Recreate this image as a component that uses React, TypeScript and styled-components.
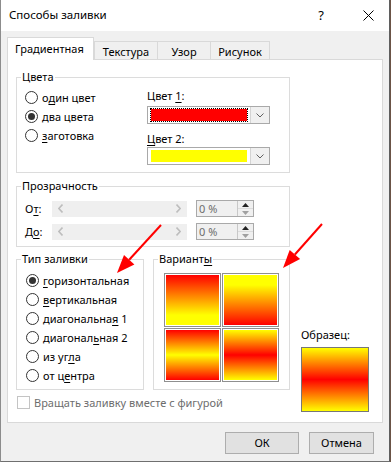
import React from "react";
import styled, { createGlobalStyle } from "styled-components";

const Global = createGlobalStyle`
  html, body { margin: 0; padding: 0; background: #6b5446; }
  body { font-family: "Noto Sans", "Open Sans", sans-serif; font-size: 11px; color: #000; }
  * { box-sizing: border-box; }
`;

const Window = styled.div`
  position: relative;
  width: 390px;
  height: 462px;
  border-left: 1px solid #8c8c8c;
  border-right: 1px solid #5f5f5f;
  border-bottom: 1px solid #6f6f6f;
  background: #f0f0f0;
  display: flex;
  flex-direction: column;
`;

const TitleBar = styled.div`
  height: 31px;
  background: #fff;
  display: flex;
  align-items: center;
  padding-left: 8px;
  font-size: 11.5px;
  line-height: 16px;
`;

const TitleText = styled.div`
  flex: 1;
  margin-top: -1px;
`;

const HelpBtn = styled.div`
  width: 20px;
  text-align: center;
  font-size: 13px;
  margin-right: 32px;
  margin-top: -2px;
`;

const CloseBtn = styled.div`
  width: 11px;
  height: 11px;
  margin-right: 15px;
  margin-top: -1px;
  display: flex;
`;

const Body = styled.div`
  flex: 1;
  padding: 6px 6px 0;
  display: flex;
  flex-direction: column;
`;

const TabStrip = styled.div`
  display: flex;
  align-items: flex-end;
  height: 23px;
  margin-bottom: -1px;
`;

const Tab = styled.div<{ $w: number; $active?: boolean }>`
  width: ${(p) => p.$w}px;
  height: ${(p) => (p.$active ? 23 : 19)}px;
  border: 1px solid #d9d9d9;
  border-bottom: none;
  margin-left: ${(p) => (p.$active ? 0 : -1)}px;
  background: ${(p) => (p.$active ? "#fff" : "#f0f0f0")};
  position: ${(p) => (p.$active ? "relative" : "static")};
  z-index: ${(p) => (p.$active ? 1 : "auto")};
  display: flex;
  align-items: center;
  justify-content: ${(p) => (p.$active ? "flex-start" : "center")};
  padding-left: ${(p) => (p.$active ? 7 : 0)}px;
  padding-top: ${(p) => (p.$active ? 0 : 2)}px;
  line-height: 16px;
  &:first-child + & { margin-left: 0; }
`;

const Panel = styled.div`
  height: 364px;
  background: #fff;
  border: 1px solid #d9d9d9;
  padding: 9px 10px 10px 8px;
  display: grid;
  grid-template-columns: 274px 70px;
  column-gap: 11px;
`;

const LeftCol = styled.div`
  display: flex;
  flex-direction: column;
`;

const RightCol = styled.div`
  display: flex;
  flex-direction: column;
  justify-content: flex-end;
`;

const Group = styled.fieldset<{ $mt?: number; $w?: number }>`
  margin: ${(p) => p.$mt ?? 0}px 0 0;
  padding: 0;
  min-width: 0;
  width: ${(p) => (p.$w ? `${p.$w}px` : "auto")};
  border: 1px solid #dcdcdc;
`;

const Legend = styled.legend`
  margin-left: 4px;
  padding: 0 1px;
  line-height: 16px;
`;

const U = styled.span`
  text-decoration: underline;
  text-underline-offset: 2px;
  text-decoration-thickness: 1px;
`;

/* Colors group */
const ColorsBody = styled.div`
  display: flex;
  padding: 3px 19px 7px 8px;
`;

const RadioCol = styled.div<{ $w?: number }>`
  width: ${(p) => (p.$w ? `${p.$w}px` : "auto")};
  display: flex;
  flex-direction: column;
`;

const RadioRow = styled.div`
  height: 19px;
  display: flex;
  align-items: center;
  gap: 4px;
  line-height: 16px;
`;

const RadioCircle = styled.span<{ $checked?: boolean }>`
  width: 13px;
  height: 13px;
  border-radius: 50%;
  border: 1px solid #333;
  background: #fff;
  display: flex;
  align-items: center;
  justify-content: center;
  flex: none;
  &::after {
    content: "";
    width: 7px;
    height: 7px;
    border-radius: 50%;
    background: ${(p) => (p.$checked ? "#333" : "transparent")};
  }
`;

const PickerCol = styled.div`
  width: 123px;
  display: flex;
  flex-direction: column;
`;

const FieldLabel = styled.div<{ $mt: number }>`
  line-height: 16px;
  margin-top: ${(p) => p.$mt}px;
`;

const Combo = styled.div<{ $mt: number }>`
  margin-top: ${(p) => p.$mt}px;
  height: 18px;
  border: 1px solid #a9a9a9;
  background: #fff;
  display: flex;
`;

const ComboField = styled.div`
  flex: 1;
  padding: 1px 2px;
  display: flex;
`;

const ComboInner = styled.div<{ $focus?: boolean }>`
  flex: 1;
  border: 1px ${(p) => (p.$focus ? "dotted #000" : "solid transparent")};
  display: flex;
`;

const ColorFill = styled.div<{ $c: string }>`
  flex: 1;
  background: ${(p) => p.$c};
`;

const ComboBtn = styled.div`
  width: 19px;
  border-left: 1px solid #d4d4d4;
  background: #f0f0f0;
  display: flex;
  align-items: center;
  justify-content: center;
`;

/* Transparency */
const TransBody = styled.div`
  display: flex;
  flex-direction: column;
  gap: 6px;
  padding: 6px 0 6px 8px;
`;

const TransRow = styled.div`
  height: 17px;
  display: flex;
  align-items: center;
`;

const TransLabel = styled.div`
  width: 27px;
  line-height: 16px;
`;

const Slider = styled.div`
  width: 135px;
  height: 16px;
  background: #efefef;
  display: flex;
  align-items: center;
  justify-content: space-between;
  padding: 0 6px 0 6px;
`;

const Spin = styled.div`
  margin-left: 9px;
  width: 58px;
  height: 17px;
  border: 1px solid #a9a9a9;
  background: #f0f0f0;
  display: flex;
`;

const SpinText = styled.div`
  flex: 1;
  color: #6d6d6d;
  padding-left: 2px;
  line-height: 15px;
`;

const SpinBtns = styled.div`
  width: 16px;
  border-left: 1px solid #c8c8c8;
  display: flex;
  flex-direction: column;
`;

const SpinHalf = styled.div<{ $down?: boolean }>`
  flex: 1;
  display: flex;
  align-items: center;
  justify-content: center;
  border-top: ${(p) => (p.$down ? "1px solid #dcdcdc" : "none")};
`;

/* Bottom */
const BottomRow = styled.div`
  display: flex;
  gap: 9px;
  margin-top: 4px;
`;

const FillTypeBody = styled.div`
  padding: 4px 0 4px 9px;
`;

const VariantsBody = styled.div`
  padding: 6px 0 7px 10px;
`;

const VariantGrid = styled.div`
  display: grid;
  grid-template-columns: 57px 57px;
  grid-template-rows: 54px 54px;
  gap: 1px;
`;

const Swatch = styled.div<{ $g: string }>`
  border: 1px solid #8f8f8f;
  padding: 1px;
  background: #fff;
  &::after {
    content: "";
    display: block;
    width: 100%;
    height: 100%;
    background: ${(p) => p.$g};
  }
`;

const CheckRow = styled.div`
  margin-top: 6px;
  height: 13px;
  display: flex;
  align-items: center;
  gap: 4px;
  padding-left: 1px;
  color: #6d6d6d;
  line-height: 16px;
`;

const CheckBox = styled.span`
  width: 13px;
  height: 13px;
  border: 1px solid #c4c4c4;
  background: #fff;
  flex: none;
`;

const SampleLabel = styled.div`
  line-height: 16px;
  margin-bottom: 4px;
`;

const Sample = styled.div`
  width: 68px;
  height: 65px;
  border: 1px solid #777;
  background: linear-gradient(#ffff00 0%, #ff0000 50%, #ffff00 100%);
`;

const Footer = styled.div`
  display: flex;
  justify-content: flex-end;
  gap: 10px;
  margin-top: 9px;
  padding-right: 9px;
`;

const Button = styled.div<{ $w: number }>`
  width: ${(p) => p.$w}px;
  height: 22px;
  background: #e1e1e1;
  border: 1px solid #adadad;
  display: flex;
  align-items: center;
  justify-content: center;
  line-height: 16px;
`;

const Overlay = styled.svg`
  position: absolute;
  left: -1px;
  top: 0;
  pointer-events: none;
`;

const Chevron = ({ dir, color }: { dir: "l" | "r" | "d"; color: string }) => {
  if (dir === "d")
    return (
      <svg width="8" height="5" viewBox="0 0 8 5">
        <path d="M0.5 0.5 L4 4 L7.5 0.5" fill="none" stroke={color} strokeWidth="1" />
      </svg>
    );
  return (
    <svg width="5" height="9" viewBox="0 0 5 9">
      <path
        d={dir === "l" ? "M4.5 0.5 L0.8 4.5 L4.5 8.5" : "M0.5 0.5 L4.2 4.5 L0.5 8.5"}
        fill="none"
        stroke={color}
        strokeWidth="1.6"
      />
    </svg>
  );
};

const Tri = ({ up, color }: { up?: boolean; color: string }) => (
  <svg width="7" height="4" viewBox="0 0 7 4">
    <path d={up ? "M0 4 L3.5 0 L7 4 Z" : "M0 0 L3.5 4 L7 0 Z"} fill={color} />
  </svg>
);

const Radio = ({ checked, children }: { checked?: boolean; children: React.ReactNode }) => (
  <RadioRow>
    <RadioCircle $checked={checked} />
    <span>{children}</span>
  </RadioRow>
);

const tabs = [
  { label: "Градиентная", w: 87, active: true },
  { label: "Текстура", w: 64 },
  { label: "Узор", w: 54 },
  { label: "Рисунок", w: 60 },
];

const variants = [
  "linear-gradient(#ff0000 0%, #ffff00 80%)",
  "linear-gradient(#ffff00 20%, #ff0000 100%)",
  "linear-gradient(#ff0000 0%, #ffff00 50%, #ff0000 100%)",
  "linear-gradient(#ffff00 0%, #ff0000 50%, #ffff00 100%)",
];

const Transparency = ({ label }: { label: React.ReactNode }) => (
  <TransRow>
    <TransLabel>{label}</TransLabel>
    <Slider>
      <Chevron dir="l" color="#bdbdbd" />
      <Chevron dir="r" color="#bdbdbd" />
    </Slider>
    <Spin>
      <SpinText>0 %</SpinText>
      <SpinBtns>
        <SpinHalf>
          <Tri up color="#222" />
        </SpinHalf>
        <SpinHalf $down>
          <Tri color="#a0a0a0" />
        </SpinHalf>
      </SpinBtns>
    </Spin>
  </TransRow>
);

export default function App() {
  return (
    <>
      <Global />
      <Window>
        <TitleBar>
          <TitleText>Способы заливки</TitleText>
          <HelpBtn>?</HelpBtn>
          <CloseBtn>
            <svg width="11" height="11" viewBox="0 0 11 11">
              <path d="M0.5 0.5 L10.5 10.5 M10.5 0.5 L0.5 10.5" stroke="#000" strokeWidth="1" />
            </svg>
          </CloseBtn>
        </TitleBar>
        <Body>
          <TabStrip>
            {tabs.map((t) => (
              <Tab key={t.label} $w={t.w} $active={t.active}>
                {t.label}
              </Tab>
            ))}
          </TabStrip>
          <Panel>
            <LeftCol>
              <Group>
                <Legend>Цвета</Legend>
                <ColorsBody>
                  <RadioCol $w={122}>
                    <Radio>
                      о<U>д</U>ин цвет
                    </Radio>
                    <Radio checked>два цвета</Radio>
                    <Radio>
                      <U>з</U>аготовка
                    </Radio>
                  </RadioCol>
                  <PickerCol>
                    <FieldLabel $mt={0}>
                      Цвет <U>1</U>:
                    </FieldLabel>
                    <Combo $mt={2}>
                      <ComboField>
                        <ComboInner $focus>
                          <ColorFill $c="#ff0000" />
                        </ComboInner>
                      </ComboField>
                      <ComboBtn>
                        <Chevron dir="d" color="#606060" />
                      </ComboBtn>
                    </Combo>
                    <FieldLabel $mt={7}>
                      <U>Ц</U>вет 2:
                    </FieldLabel>
                    <Combo $mt={0}>
                      <ComboField>
                        <ComboInner>
                          <ColorFill $c="#ffff00" />
                        </ComboInner>
                      </ComboField>
                      <ComboBtn>
                        <Chevron dir="d" color="#606060" />
                      </ComboBtn>
                    </Combo>
                  </PickerCol>
                </ColorsBody>
              </Group>

              <Group $mt={5}>
                <Legend>Прозрачность</Legend>
                <TransBody>
                  <Transparency
                    label={
                      <>
                        О<U>т</U>:
                      </>
                    }
                  />
                  <Transparency
                    label={
                      <>
                        Д<U>о</U>:
                      </>
                    }
                  />
                </TransBody>
              </Group>

              <BottomRow>
                <Group $w={128}>
                  <Legend>Тип заливки</Legend>
                  <FillTypeBody>
                    <RadioCol>
                      <Radio checked>
                        <U>г</U>оризонтальная
                      </Radio>
                      <Radio>
                        <U>в</U>ертикальная
                      </Radio>
                      <Radio>
                        диагональна<U>я</U> 1
                      </Radio>
                      <Radio>
                        диагонал<U>ь</U>ная 2
                      </Radio>
                      <Radio>
                        из уг<U>л</U>а
                      </Radio>
                      <Radio>
                        от ц<U>е</U>нтра
                      </Radio>
                    </RadioCol>
                  </FillTypeBody>
                </Group>
                <Group $w={137}>
                  <Legend>
                    Вариант<U>ы</U>
                  </Legend>
                  <VariantsBody>
                    <VariantGrid>
                      {variants.map((g, i) => (
                        <Swatch key={i} $g={g} />
                      ))}
                    </VariantGrid>
                  </VariantsBody>
                </Group>
              </BottomRow>

              <CheckRow>
                <CheckBox />
                <span>Вращать заливку вместе с фигурой</span>
              </CheckRow>
            </LeftCol>
            <RightCol>
              <SampleLabel>Образец:</SampleLabel>
              <Sample />
            </RightCol>
          </Panel>
          <Footer>
            <Button $w={74}>ОК</Button>
            <Button $w={65}>Отмена</Button>
          </Footer>
        </Body>
        <Overlay width="391" height="462" viewBox="0 0 391 462">
          <line x1="161" y1="225" x2="129.2" y2="259.7" stroke="#f00" strokeWidth="2" />
          <polygon points="117,273 134.4,264.4 124,255" fill="#f00" />
          <line x1="322" y1="224" x2="294.9" y2="254.5" stroke="#f00" strokeWidth="2" />
          <polygon points="283,268 300.1,259.1 289.7,249.9" fill="#f00" />
        </Overlay>
      </Window>
    </>
  );
}
